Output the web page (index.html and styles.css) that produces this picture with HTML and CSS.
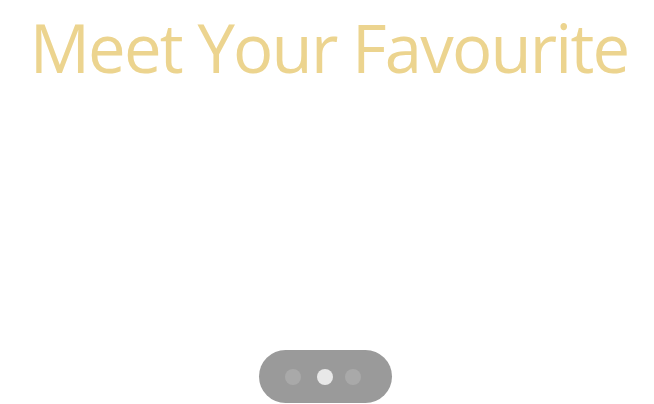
FILE: index.html
```html
<!DOCTYPE html>
<html>
<head>
<meta charset="utf-8">
<link rel="stylesheet" href="styles.css">
</head>
<body>
<main class="screen">
  <h1 class="title">Meet Your Favourite</h1>
  <div class="pager">
    <span class="dot"></span>
    <span class="dot active"></span>
    <span class="dot"></span>
  </div>
</main>
</body>
</html>
```

FILE: styles.css
```css
html, body {
  margin: 0;
  padding: 0;
  background: #ffffff;
}
.screen {
  width: 654px;
  height: 404px;
  display: flex;
  flex-direction: column;
  align-items: center;
  box-sizing: border-box;
}
.title {
  margin: 14px 0 0 4px;
  font-family: "Open Sans", "Noto Sans", sans-serif;
  font-weight: 400;
  font-size: 67px;
  line-height: 67px;
  letter-spacing: -1.8px;
  color: #ecd48f;
  white-space: nowrap;
}
.pager {
  margin-top: auto;
  margin-bottom: 1px;
  margin-right: 3px;
  width: 133px;
  height: 53px;
  padding-left: 26px;
  box-sizing: border-box;
  border-radius: 27px;
  background: #9a9a9a;
  display: flex;
  align-items: center;
  justify-content: flex-start;
}
.dot {
  width: 16px;
  height: 16px;
  border-radius: 50%;
  background: #a9a9a9;
}
.dot.active {
  margin: 0 12px 0 16px;
  background: #e8e8e8;
}
```
